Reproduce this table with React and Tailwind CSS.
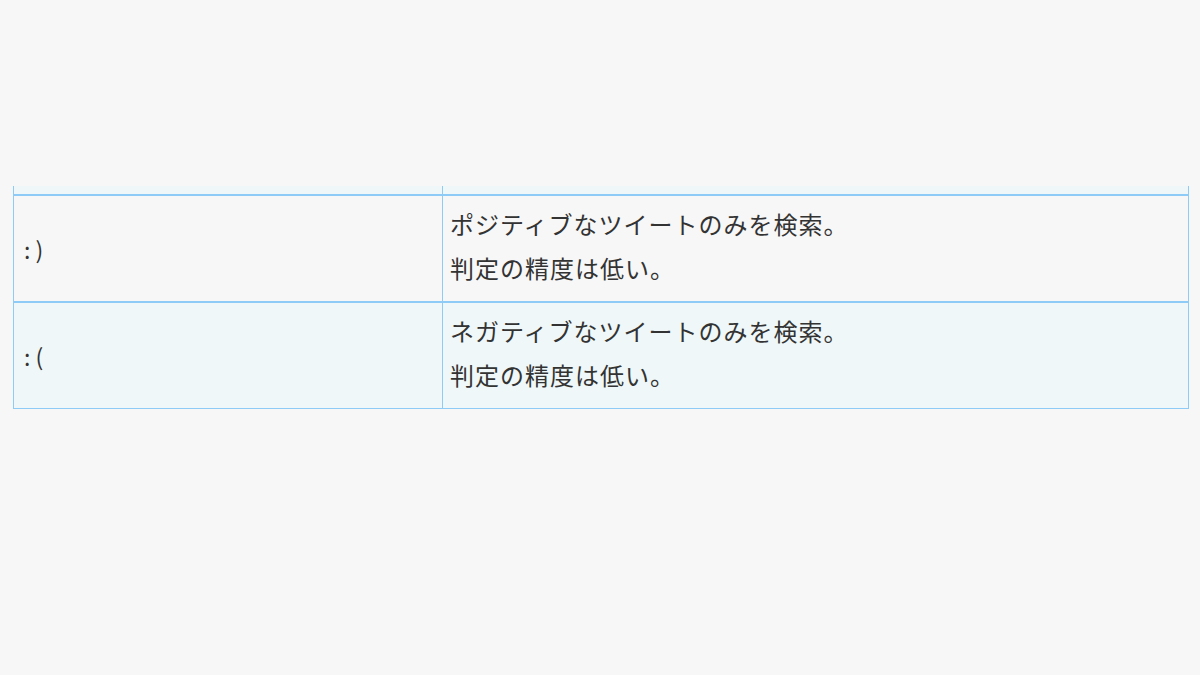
export default function App() {
  const font = { fontFamily: '"Noto Sans CJK JP", "Noto Sans", sans-serif' };
  const rows = [
    { key: ':)', lines: ['ポジティブなツイートのみを検索。', '判定の精度は低い。'], bg: 'bg-[#f7f7f7]' },
    { key: ':(', lines: ['ネガティブなツイートのみを検索。', '判定の精度は低い。'], bg: 'bg-[#eff7f8]' },
  ];
  return (
    <div className="min-h-[675px] w-[1200px] bg-[#f7f7f7] pt-[186px] pl-[13px]" style={font}>
      <div className="w-[1176px] text-[#333333]">
        <div className="flex h-[8px] bg-[#eff7f8] border-x border-[#8ecbf6]">
          <div className="w-[429px] border-r border-[#8ecbf6]"></div>
          <div className="flex-1"></div>
        </div>
        {rows.map((r, i) => (
          <div
            key={i}
            className={`flex border-t-2 border-x border-[#8ecbf6] ${r.bg} ${i === rows.length - 1 ? 'border-b' : ''}`}
          >
            <div className="w-[429px] border-r border-[#8ecbf6] flex items-center pl-[10px] text-[23px] h-[105px]">
              <span className="pt-[1px] tracking-[5px]">{r.key}</span>
            </div>
            <div className="flex-1 pl-[7px] pt-[6px] text-[24px] leading-[44px] tracking-[1px]">
              {r.lines.map((l, j) => (
                <div key={j}>{l}</div>
              ))}
            </div>
          </div>
        ))}
      </div>
    </div>
  );
}
